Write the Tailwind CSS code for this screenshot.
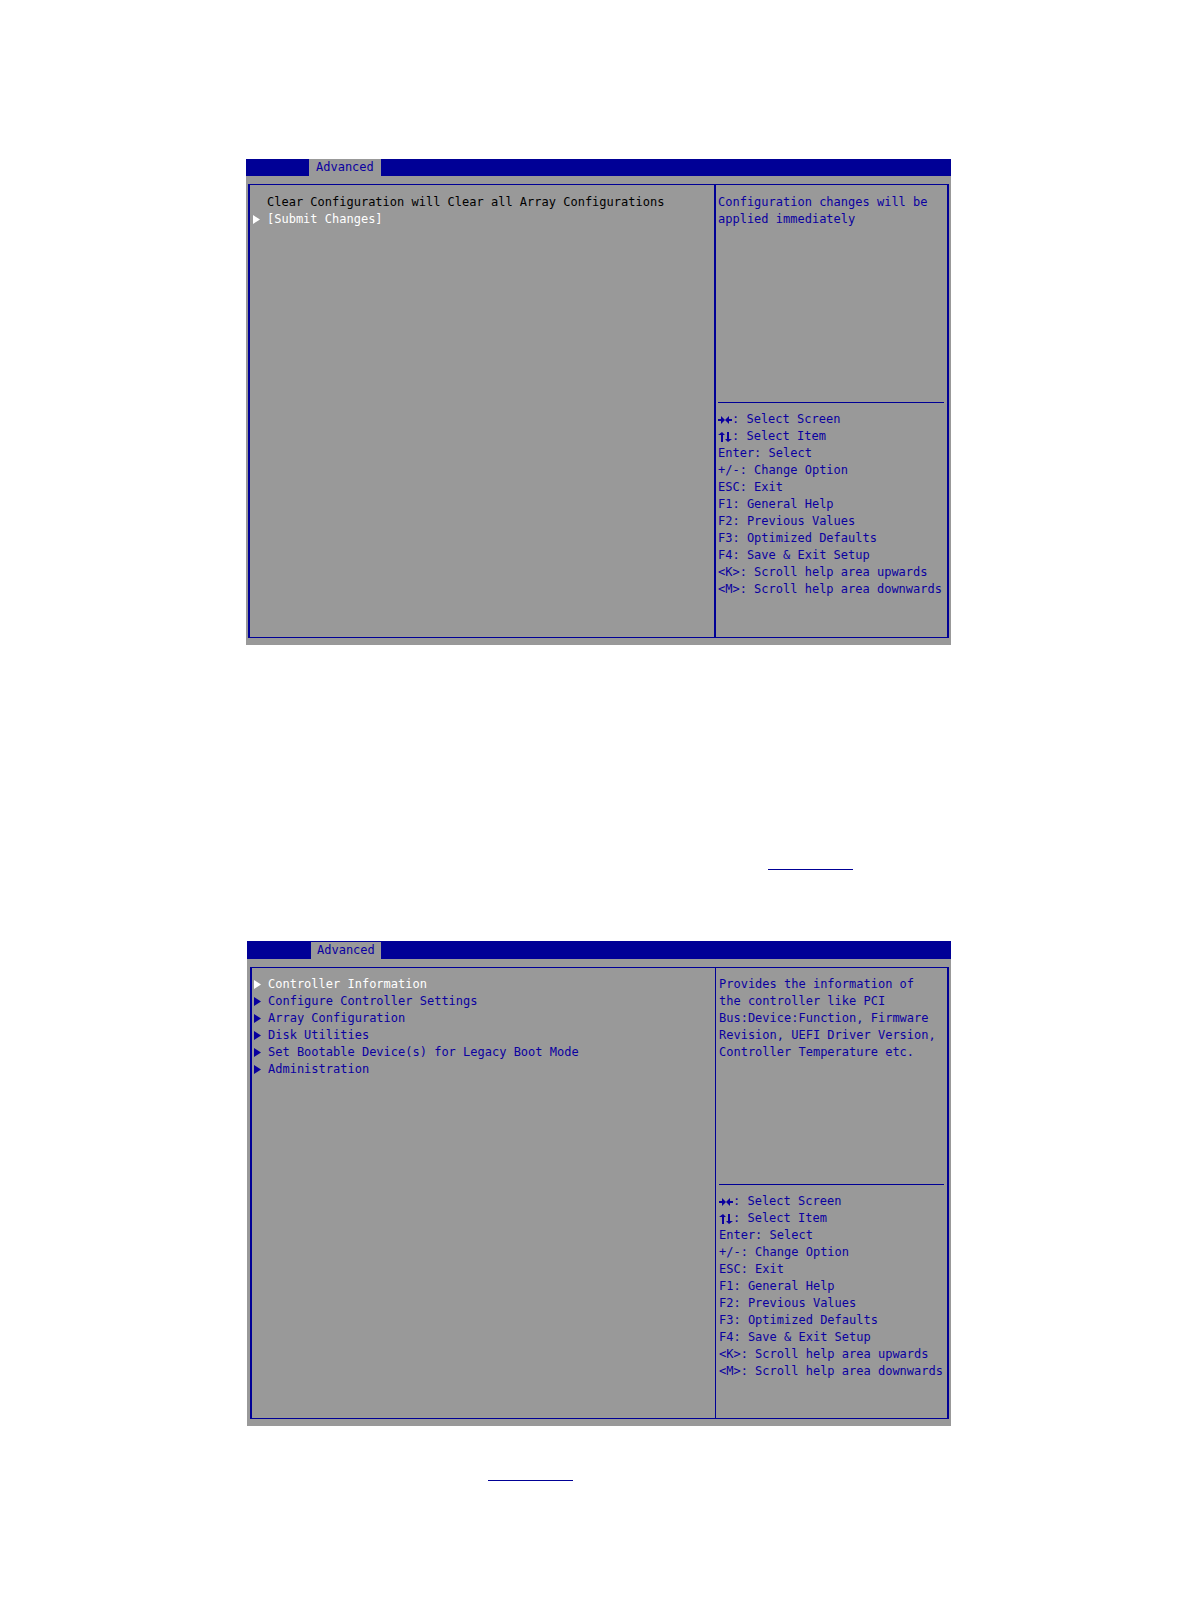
<!DOCTYPE html>
<html lang="en">
<head>
<meta charset="utf-8">
<title>Clear Configuration</title>
<script src="https://cdn.jsdelivr.net/npm/@tailwindcss/browser@4"></script>
</head>
<body class="bg-white">
<main class="flex flex-col pt-[159px] pr-[239px] pb-[135px] pl-[246px] font-['DejaVu_Sans_Mono',monospace] text-[12px] leading-[17px] text-[#0a00a0]">

  <section class="bg-[#999999] pb-[7px]" aria-label="Clear configuration">
    <nav class="flex h-[17px] bg-[#000096] pl-[63px]">
      <button type="button" class="bg-[#999999] px-[7px]">Advanced</button>
    </nav>
    <div class="mx-[2px] mt-2 grid min-h-[454px] grid-cols-[minmax(0,1fr)_233px] border-x-2 border-y border-[#000096]">
      <div class="flex flex-col pt-[9px] pl-[3px]">
        <p class="pl-[14px] text-black">Clear Configuration will Clear all Array Configurations</p>
        <a href="#submit" class="flex items-center gap-[7px] text-white">
          <svg class="h-[9px] w-[7px]" viewBox="0 0 7 9" fill="currentColor" aria-hidden="true"><path d="M0 0L7 4.5L0 9Z"/></svg>[Submit Changes]</a>
      </div>
      <aside class="flex flex-col border-l-2 border-[#000096] pr-[3px] pl-[2px]">
        <p class="h-[217px] pt-[9px]">Configuration changes will be<br>applied immediately</p>
        <hr class="border-[#000096]">
        <ul class="pt-2 whitespace-nowrap">
          <li class="flex items-center"><svg class="h-[10px] w-[14px]" viewBox="0 0 14 10" fill="currentColor" role="img" aria-label="Right and left arrows"><path d="M0 4H3V1L7 5L3 9V6H0ZM14 4H11V1L7 5L11 9V6H14Z"/></svg>: Select Screen</li>
          <li class="flex items-center"><svg class="h-[10px] w-[14px]" viewBox="0 0 14 10" fill="currentColor" role="img" aria-label="Up and down arrows"><path d="M3 10V3H0L4 0L7 3H5V10ZM9 0V7H7L10 10L14 7H11V0Z"/></svg>: Select Item</li>
          <li>Enter: Select</li>
          <li>+/-: Change Option</li>
          <li>ESC: Exit</li>
          <li>F1: General Help</li>
          <li>F2: Previous Values</li>
          <li>F3: Optimized Defaults</li>
          <li>F4: Save &amp; Exit Setup</li>
          <li>&lt;K&gt;: Scroll help area upwards</li>
          <li>&lt;M&gt;: Scroll help area downwards</li>
        </ul>
      </aside>
    </div>
  </section>

  <div class="flex pt-[208px] pl-[522px]">
    <a href="#figure-1" aria-label="Figure" class="h-[17px] w-[85px] border-b border-[#000096]"></a>
  </div>

  <section class="mt-[71px] ml-px bg-[#999999] pb-[7px]" aria-label="Controller menu">
    <nav class="flex h-[18px] bg-[#000096] pt-px pl-[64px]">
      <button type="button" class="bg-[#999999] px-[6px]">Advanced</button>
    </nav>
    <div class="mr-[2px] ml-[3px] mt-2 grid min-h-[452px] grid-cols-[minmax(0,1fr)_232px] border-x-2 border-y border-[#000096]">
      <ul class="pt-2 pl-[2px]">
        <li><a href="#info" class="flex items-center gap-[7px] text-white"><svg class="h-[9px] w-[7px]" viewBox="0 0 7 9" fill="currentColor" aria-hidden="true"><path d="M0 0L7 4.5L0 9Z"/></svg>Controller Information</a></li>
        <li><a href="#settings" class="flex items-center gap-[7px]"><svg class="h-[9px] w-[7px]" viewBox="0 0 7 9" fill="currentColor" aria-hidden="true"><path d="M0 0L7 4.5L0 9Z"/></svg>Configure Controller Settings</a></li>
        <li><a href="#array" class="flex items-center gap-[7px]"><svg class="h-[9px] w-[7px]" viewBox="0 0 7 9" fill="currentColor" aria-hidden="true"><path d="M0 0L7 4.5L0 9Z"/></svg>Array Configuration</a></li>
        <li><a href="#disk" class="flex items-center gap-[7px]"><svg class="h-[9px] w-[7px]" viewBox="0 0 7 9" fill="currentColor" aria-hidden="true"><path d="M0 0L7 4.5L0 9Z"/></svg>Disk Utilities</a></li>
        <li><a href="#boot" class="flex items-center gap-[7px]"><svg class="h-[9px] w-[7px]" viewBox="0 0 7 9" fill="currentColor" aria-hidden="true"><path d="M0 0L7 4.5L0 9Z"/></svg>Set Bootable Device(s) for Legacy Boot Mode</a></li>
        <li><a href="#admin" class="flex items-center gap-[7px]"><svg class="h-[9px] w-[7px]" viewBox="0 0 7 9" fill="currentColor" aria-hidden="true"><path d="M0 0L7 4.5L0 9Z"/></svg>Administration</a></li>
      </ul>
      <aside class="flex flex-col border-l border-[#000096] pr-[3px] pl-[3px]">
        <p class="h-[216px] pt-2 whitespace-nowrap">Provides the information of<br>the controller like PCI<br>Bus:Device:Function, Firmware<br>Revision, UEFI Driver Version,<br>Controller Temperature etc.</p>
        <hr class="border-[#000096]">
        <ul class="pt-2 whitespace-nowrap">
          <li class="flex items-center"><svg class="h-[10px] w-[14px]" viewBox="0 0 14 10" fill="currentColor" role="img" aria-label="Right and left arrows"><path d="M0 4H3V1L7 5L3 9V6H0ZM14 4H11V1L7 5L11 9V6H14Z"/></svg>: Select Screen</li>
          <li class="flex items-center"><svg class="h-[10px] w-[14px]" viewBox="0 0 14 10" fill="currentColor" role="img" aria-label="Up and down arrows"><path d="M3 10V3H0L4 0L7 3H5V10ZM9 0V7H7L10 10L14 7H11V0Z"/></svg>: Select Item</li>
          <li>Enter: Select</li>
          <li>+/-: Change Option</li>
          <li>ESC: Exit</li>
          <li>F1: General Help</li>
          <li>F2: Previous Values</li>
          <li>F3: Optimized Defaults</li>
          <li>F4: Save &amp; Exit Setup</li>
          <li>&lt;K&gt;: Scroll help area upwards</li>
          <li>&lt;M&gt;: Scroll help area downwards</li>
        </ul>
      </aside>
    </div>
  </section>

  <div class="flex pt-[38px] pl-[242px]">
    <a href="#figure-2" aria-label="Figure" class="h-[17px] w-[85px] border-b border-[#000096]"></a>
  </div>
</main>
</body>
</html>
